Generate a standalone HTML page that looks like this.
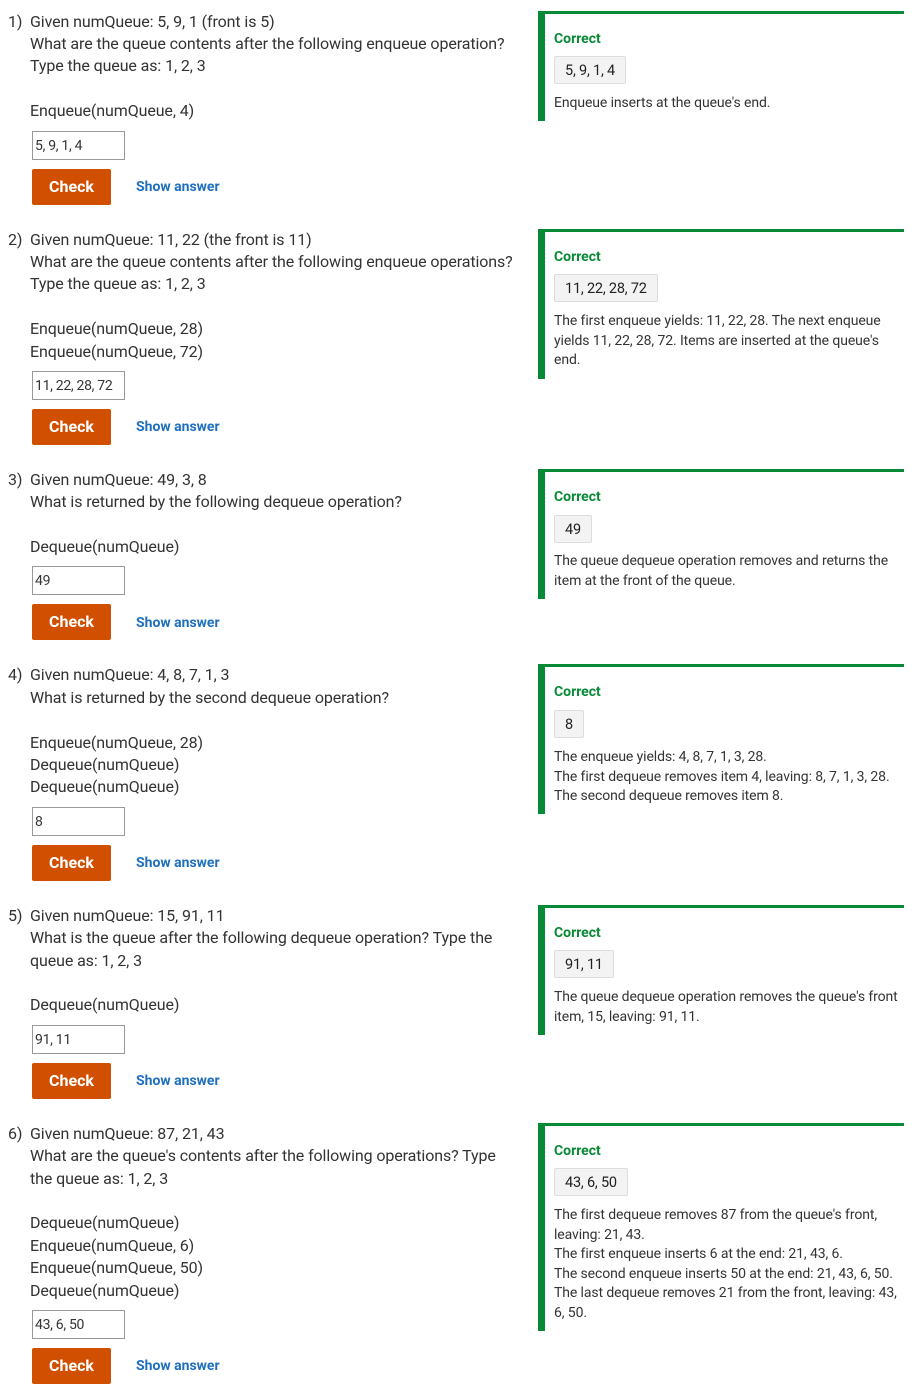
<!DOCTYPE html>
<html><head><meta charset="utf-8"><style>
body{margin:0;width:921px;height:1389px;position:relative;background:#fff;font-family:"Roboto","Liberation Sans",sans-serif;color:#333;overflow:hidden}
.a{position:absolute;white-space:nowrap}
.l{font-size:16px;line-height:22px;height:22px;letter-spacing:-0.1px;margin-top:1px}
.n{left:8px}
.t{left:30px}
.in{left:32px;border:1px solid #999;font-size:14px;line-height:29px;padding-left:2px;box-sizing:border-box;width:93px;height:29px;color:#333;letter-spacing:-0.3px}
.btn{left:32px;width:79px;height:36px;background:#d14f00;border-radius:2px;color:#fff;font-weight:bold;font-size:16px;line-height:36px;text-align:center}
.sa{left:136px;color:#1f6fc0;font-weight:bold;font-size:14px;line-height:20px;margin-top:1px}
.p{position:absolute;left:538px;width:366px;border-left:7px solid #078a36;border-top:3px solid #078a36;box-sizing:border-box}
.c{left:554px;color:#078a36;font-weight:bold;font-size:14px;line-height:20px;margin-top:1px}
.b{left:554px;background:#f3f3f3;border:1px solid #ddd;border-radius:2px;height:28px;line-height:28px;padding:0 10px;font-size:14.5px;color:#222;box-sizing:border-box;letter-spacing:-0.2px}
.e{left:554px;font-size:14px;line-height:19.6px;letter-spacing:-0.1px;color:#333;margin-top:1px}
</style></head><body>

<!-- Q1 -->
<div class="a l n" style="top:10px">1)</div>
<div class="a l t" style="top:10px">Given numQueue: 5, 9, 1 (front is 5)</div>
<div class="a l t" style="top:32px">What are the queue contents after the following enqueue operation?</div>
<div class="a l t" style="top:54px">Type the queue as: 1, 2, 3</div>
<div class="a l t" style="top:99px">Enqueue(numQueue, 4)</div>
<div class="a in" style="top:131px">5, 9, 1, 4</div>
<div class="a btn" style="top:169px">Check</div>
<div class="a sa" style="top:176px">Show answer</div>
<div class="p" style="top:11px;height:110px"></div>
<div class="a c" style="top:28px">Correct</div>
<div class="a b" style="top:56px">5, 9, 1, 4</div>
<div class="a e" style="top:93px">Enqueue inserts at the queue's end.</div>

<!-- Q2 -->
<div class="a l n" style="top:228px">2)</div>
<div class="a l t" style="top:228px">Given numQueue: 11, 22 (the front is 11)</div>
<div class="a l t" style="top:250px">What are the queue contents after the following enqueue operations?</div>
<div class="a l t" style="top:272px">Type the queue as: 1, 2, 3</div>
<div class="a l t" style="top:317px">Enqueue(numQueue, 28)</div>
<div class="a l t" style="top:340px">Enqueue(numQueue, 72)</div>
<div class="a in" style="top:371px">11, 22, 28, 72</div>
<div class="a btn" style="top:409px">Check</div>
<div class="a sa" style="top:416px">Show answer</div>
<div class="p" style="top:229px;height:150px"></div>
<div class="a c" style="top:246px">Correct</div>
<div class="a b" style="top:274px">11, 22, 28, 72</div>
<div class="a e" style="top:311px">The first enqueue yields: 11, 22, 28. The next enqueue<br>yields 11, 22, 28, 72. Items are inserted at the queue's<br>end.</div>

<!-- Q3 -->
<div class="a l n" style="top:468px">3)</div>
<div class="a l t" style="top:468px">Given numQueue: 49, 3, 8</div>
<div class="a l t" style="top:490px">What is returned by the following dequeue operation?</div>
<div class="a l t" style="top:535px">Dequeue(numQueue)</div>
<div class="a in" style="top:566px">49</div>
<div class="a btn" style="top:604px">Check</div>
<div class="a sa" style="top:612px">Show answer</div>
<div class="p" style="top:469px;height:130px"></div>
<div class="a c" style="top:486px">Correct</div>
<div class="a b" style="top:515px">49</div>
<div class="a e" style="top:551px">The queue dequeue operation removes and returns the<br>item at the front of the queue.</div>

<!-- Q4 -->
<div class="a l n" style="top:663px">4)</div>
<div class="a l t" style="top:663px">Given numQueue: 4, 8, 7, 1, 3</div>
<div class="a l t" style="top:686px">What is returned by the second dequeue operation?</div>
<div class="a l t" style="top:731px">Enqueue(numQueue, 28)</div>
<div class="a l t" style="top:753px">Dequeue(numQueue)</div>
<div class="a l t" style="top:775px">Dequeue(numQueue)</div>
<div class="a in" style="top:807px">8</div>
<div class="a btn" style="top:845px">Check</div>
<div class="a sa" style="top:852px">Show answer</div>
<div class="p" style="top:664px;height:150px"></div>
<div class="a c" style="top:681px">Correct</div>
<div class="a b" style="top:710px">8</div>
<div class="a e" style="top:747px">The enqueue yields: 4, 8, 7, 1, 3, 28.<br>The first dequeue removes item 4, leaving: 8, 7, 1, 3, 28.<br>The second dequeue removes item 8.</div>

<!-- Q5 -->
<div class="a l n" style="top:904px">5)</div>
<div class="a l t" style="top:904px">Given numQueue: 15, 91, 11</div>
<div class="a l t" style="top:926px">What is the queue after the following dequeue operation? Type the</div>
<div class="a l t" style="top:949px">queue as: 1, 2, 3</div>
<div class="a l t" style="top:993px">Dequeue(numQueue)</div>
<div class="a in" style="top:1025px">91, 11</div>
<div class="a btn" style="top:1063px">Check</div>
<div class="a sa" style="top:1070px">Show answer</div>
<div class="p" style="top:905px;height:130px"></div>
<div class="a c" style="top:922px">Correct</div>
<div class="a b" style="top:950px">91, 11</div>
<div class="a e" style="top:987px">The queue dequeue operation removes the queue's front<br>item, 15, leaving: 91, 11.</div>

<!-- Q6 -->
<div class="a l n" style="top:1122px">6)</div>
<div class="a l t" style="top:1122px">Given numQueue: 87, 21, 43</div>
<div class="a l t" style="top:1144px">What are the queue's contents after the following operations? Type</div>
<div class="a l t" style="top:1167px">the queue as: 1, 2, 3</div>
<div class="a l t" style="top:1211px">Dequeue(numQueue)</div>
<div class="a l t" style="top:1234px">Enqueue(numQueue, 6)</div>
<div class="a l t" style="top:1256px">Enqueue(numQueue, 50)</div>
<div class="a l t" style="top:1279px">Dequeue(numQueue)</div>
<div class="a in" style="top:1310px">43, 6, 50</div>
<div class="a btn" style="top:1348px">Check</div>
<div class="a sa" style="top:1355px">Show answer</div>
<div class="p" style="top:1123px;height:208px"></div>
<div class="a c" style="top:1140px">Correct</div>
<div class="a b" style="top:1168px">43, 6, 50</div>
<div class="a e" style="top:1205px">The first dequeue removes 87 from the queue's front,<br>leaving: 21, 43.<br>The first enqueue inserts 6 at the end: 21, 43, 6.<br>The second enqueue inserts 50 at the end: 21, 43, 6, 50.<br>The last dequeue removes 21 from the front, leaving: 43,<br>6, 50.</div>

</body></html>
